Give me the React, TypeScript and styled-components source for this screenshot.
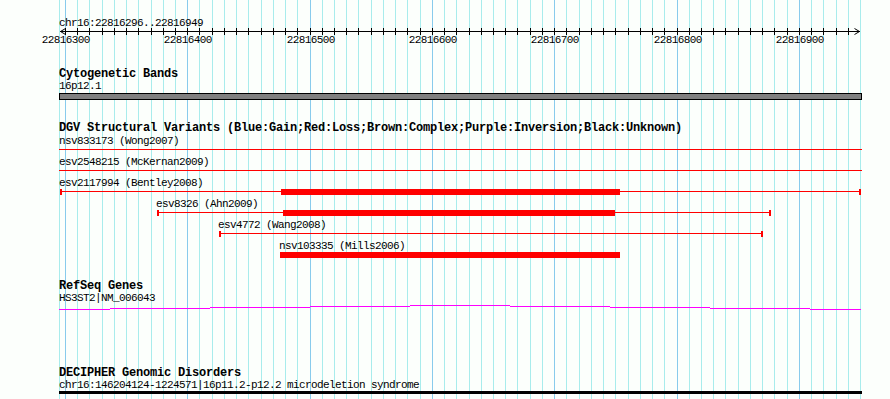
import React from "react";
import styled, { createGlobalStyle } from "styled-components";

const VIEW_START = 22816296;
const VIEW_END = 22816949;
const PX_PER_BP = 800 / 654;
const PANEL_LEFT = 59;
const PANEL_RIGHT = 861;

const toCol = (bp: number) => 60 + Math.round((bp - VIEW_START) * PX_PER_BP);
const clampCol = (c: number) => Math.max(PANEL_LEFT, Math.min(PANEL_RIGHT + 1, c));
const toX = (bp: number) => clampCol(toCol(bp)) - PANEL_LEFT;

interface Variant {
    name: string;
    study: string;
    start: number;
    end: number;
    thick?: [number, number];
    capped?: boolean;
}

const variants: Variant[] = [
    { name: "nsv833173", study: "Wong2007", start: 22816100, end: 22817200 },
    { name: "esv2548215", study: "McKernan2009", start: 22816100, end: 22817200 },
    { name: "esv2117994", study: "Bentley2008", start: 22816296, end: 22816951, thick: [22816477, 22816754], capped: true },
    { name: "esv8326", study: "Ahn2009", start: 22816375, end: 22816877, thick: [22816478, 22816750], capped: true },
    { name: "esv4772", study: "Wang2008", start: 22816426, end: 22816871, capped: true },
    { name: "nsv103335", study: "Mills2006", start: 22816476, end: 22816754, thick: [22816476, 22816754] },
];

const GlobalStyle = createGlobalStyle`
    html, body {
        margin: 0;
        padding: 0;
        background: #fcfffc;
        overflow: hidden;
    }
`;

const Browser = styled.div`
    position: relative;
    width: 890px;
    height: 399px;
    overflow: hidden;
    background: #fcfffc;
    color: #000;
    font-family: "Liberation Mono", "DejaVu Sans Mono", monospace;
`;

const GridLayer = styled.svg`
    position: absolute;
    left: 0;
    top: 0;
    pointer-events: none;
`;

const Panel = styled.div`
    position: relative;
    margin-left: ${PANEL_LEFT}px;
    width: ${PANEL_RIGHT - PANEL_LEFT + 1}px;
    display: flex;
    flex-direction: column;
`;

const Ruler = styled.div`
    padding-top: 18px;
    display: flex;
    flex-direction: column;
`;

const Track = styled.section<{ $space: number }>`
    margin-top: ${(p) => p.$space}px;
    display: flex;
    flex-direction: column;
`;

const TrackTitle = styled.div`
    font-weight: 700;
    font-size: 12px;
    letter-spacing: -0.2px;
    line-height: 11px;
    height: 11px;
    white-space: pre;
`;

const TrackLabel = styled.div<{ $gap?: number }>`
    margin-top: ${(p) => p.$gap ?? 0}px;
    font-size: 11px;
    letter-spacing: -0.6px;
    line-height: 10px;
    height: 10px;
    white-space: pre;
`;

const Glyph = styled.svg<{ $h: number }>`
    display: block;
    height: ${(p) => p.$h}px;
    width: ${PANEL_RIGHT - PANEL_LEFT + 1}px;
    overflow: visible;
    shape-rendering: crispEdges;
`;

const Rows = styled.div`
    margin-top: 2px;
    display: flex;
    flex-direction: column;
`;

const FeatureRow = styled.div`
    height: 21px;
    display: flex;
    flex-direction: column;
`;

const TickLabel = styled.text`
    font-family: "Liberation Mono", "DejaVu Sans Mono", monospace;
    font-size: 11px;
    letter-spacing: -0.6px;
    fill: #000;
`;

function Grid() {
    const lines: { col: number; major: boolean }[] = [{ col: PANEL_LEFT, major: false }];
    for (let p = 22816300; p <= 22816950; p += 10) {
        lines.push({ col: toCol(p), major: p % 100 === 0 });
    }
    return (
        <GridLayer width={890} height={399} shapeRendering="crispEdges">
            {lines.map((l) => (
                <rect key={l.col} x={l.col} y={0} width={1} height={399} fill={l.major ? "#88cbec" : "#a8ecec"} />
            ))}
        </GridLayer>
    );
}

function Axis() {
    const ticks: number[] = [];
    for (let p = 22816300; p <= 22816940; p += 10) ticks.push(p);
    const x0 = toX(VIEW_START);
    const x1 = toX(VIEW_END + 1);
    return (
        <Glyph $h={22}>
            <rect x={x0} y={3} width={x1 - x0} height={1} fill="#000" />
            <path d={`M${x0 + 5.5} 0.5 L${x0 + 0.5} 3.5 L${x0 + 5.5} 6.5`} stroke="#000" fill="none" shapeRendering="auto" />
            <path d={`M${x1 - 5.5} 0.5 L${x1 - 0.5} 3.5 L${x1 - 5.5} 6.5`} stroke="#000" fill="none" shapeRendering="auto" />
            {ticks.map((p) => (
                <rect key={p} x={toX(p)} y={0} width={1} height={7} fill="#000" />
            ))}
            {ticks
                .filter((p) => p % 100 === 0)
                .map((p) => (
                    <TickLabel key={p} x={toX(p) + 0.8} y={15} textAnchor="middle">
                        {p}
                    </TickLabel>
                ))}
        </Glyph>
    );
}

function VariantGlyph({ v }: { v: Variant }) {
    const a = toX(v.start);
    const b = toX(v.end);
    return (
        <Glyph $h={11}>
            <rect x={a} y={3} width={b - a} height={1} fill="#ff0000" />
            {v.capped && (
                <>
                    <rect x={a} y={1} width={2} height={6} fill="#ff0000" />
                    <rect x={b - 2} y={1} width={2} height={6} fill="#ff0000" />
                </>
            )}
            {v.thick && (
                <rect x={toX(v.thick[0])} y={1} width={toX(v.thick[1]) - toX(v.thick[0])} height={6} fill="#ff0000" />
            )}
        </Glyph>
    );
}

// intron hat of HS3ST2, peaks mid-view
function GeneGlyph() {
    const runs: { x: number; w: number; y: number }[] = [];
    for (let c = PANEL_LEFT; c <= PANEL_RIGHT - 1; c++) {
        const y = 2 + Math.round(Math.abs(c + 0.5 - 460) / 100);
        const last = runs[runs.length - 1];
        if (last && last.y === y) last.w += 1;
        else runs.push({ x: c - PANEL_LEFT, w: 1, y });
    }
    return (
        <Glyph $h={8}>
            {runs.map((r) => (
                <rect key={r.x} x={r.x} y={r.y} width={r.w} height={1} fill="#ff00ff" />
            ))}
        </Glyph>
    );
}

export default function App() {
    const full = PANEL_RIGHT - PANEL_LEFT + 1;
    return (
        <>
            <GlobalStyle />
            <Browser>
                <Grid />
                <Panel>
                    <Ruler>
                        <TrackLabel>chr16:22816296..22816949</TrackLabel>
                        <Axis />
                    </Ruler>

                    <Track $space={19}>
                        <TrackTitle>Cytogenetic Bands</TrackTitle>
                        <TrackLabel $gap={1}>16p12.1</TrackLabel>
                        <Glyph $h={11}>
                            <rect x={0.5} y={2.5} width={full - 1} height={6} fill="#808080" stroke="#000" />
                        </Glyph>
                    </Track>

                    <Track $space={21}>
                        <TrackTitle>DGV Structural Variants (Blue:Gain;Red:Loss;Brown:Complex;Purple:Inversion;Black:Unknown)</TrackTitle>
                        <Rows>
                            {variants.map((v) => (
                                <FeatureRow key={v.name}>
                                    <TrackLabel style={{ paddingLeft: Math.max(0, toX(v.start) - 1) }}>
                                        {`${v.name} (${v.study})`}
                                    </TrackLabel>
                                    <VariantGlyph v={v} />
                                </FeatureRow>
                            ))}
                        </Rows>
                    </Track>

                    <Track $space={19}>
                        <TrackTitle>RefSeq Genes</TrackTitle>
                        <TrackLabel $gap={1}>HS3ST2|NM_006043</TrackLabel>
                        <GeneGlyph />
                    </Track>

                    <Track $space={57}>
                        <TrackTitle>DECIPHER Genomic Disorders</TrackTitle>
                        <TrackLabel $gap={1}>chr16:146204124-1224571|16p11.2-p12.2 microdeletion syndrome</TrackLabel>
                        <Glyph $h={9}>
                            <rect x={0} y={1} width={full} height={3} fill="#000" />
                        </Glyph>
                    </Track>
                </Panel>
            </Browser>
        </>
    );
}
